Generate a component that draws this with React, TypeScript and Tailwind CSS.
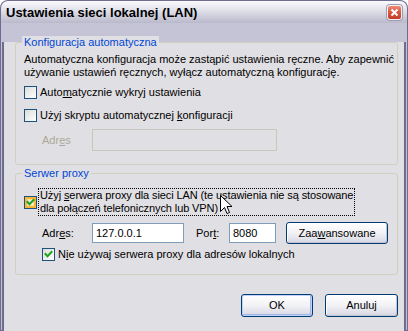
import React from "react";

const FONT = { fontFamily: "Tahoma, 'Liberation Sans', Arial, sans-serif" };

function Check({ checked, hot }: { checked?: boolean; hot?: boolean }) {
  return (
    <div className="relative w-[13px] h-[13px] shrink-0 border border-[#1c5180] bg-gradient-to-br from-[#dcdcd7] to-white">
      {hot && (
        <div className="absolute inset-0 border-2 border-[#f8b636] shadow-[inset_0_0_0_1px_#fedf9c]" />
      )}
      {checked && (
        <svg className="absolute left-[1px] top-[1px]" width="9" height="9" viewBox="0 0 9 9">
          <path d="M1.5 4 L3.5 6.2 L7.5 2" stroke="#21a121" strokeWidth="2" fill="none" strokeLinecap="square" />
        </svg>
      )}
    </div>
  );
}

function Btn({ children, className = "" }: { children: React.ReactNode; className?: string }) {
  return (
    <div
      className={
        "flex items-center justify-center rounded-[3px] border border-[#003c74] bg-gradient-to-b from-white via-[#f2f2f6] to-[#d6d6e2] shadow-[inset_-1px_-1px_0_#c3c3d3,inset_1px_1px_0_#ffffff] text-[11px] text-black " +
        className
      }
    >
      {children}
    </div>
  );
}

function Cursor() {
  return (
    <svg className="absolute left-[220px] top-[195px]" width="13" height="20" viewBox="0 0 13 20">
      <path
        d="M0.5 0.5 L0.5 16.5 L4.5 12.5 L7 18.5 L9.5 17.5 L7 11.5 L12 11.5 Z"
        fill="white"
        stroke="black"
        strokeWidth="1"
        strokeLinejoin="miter"
      />
    </svg>
  );
}

export default function App() {
  return (
    <div className="w-[408px] h-[331px] bg-white" style={FONT}>
      <div className="relative w-[408px] h-[331px] flex flex-col rounded-t-[8px] overflow-hidden bg-[#6f6d8f] p-[1px]">
        {/* title bar */}
        <div className="h-[22px] shrink-0 rounded-t-[7px] bg-gradient-to-b from-[#fbfbfd] via-[#dcdce6] to-[#b9b9cb] flex items-center pl-[5px] pr-[5px]">
          <span className="text-[13px] font-bold text-black leading-none mt-[1px]">
            Ustawienia sieci lokalnej (LAN)
          </span>
          <div className="ml-auto w-[15px] h-[15px] rounded-[3px] border border-[#f4f0f0] bg-gradient-to-b from-[#ee8a78] via-[#d8563f] to-[#c23d27] flex items-center justify-center shadow-[0_0_0_1px_#9e9cb4]">
            <svg width="9" height="9" viewBox="0 0 9 9">
              <path d="M1.5 1.5 L7.5 7.5 M7.5 1.5 L1.5 7.5" stroke="white" strokeWidth="2" />
            </svg>
          </div>
        </div>
        {/* body */}
        <div className="flex-1 bg-[#c5c4d6] px-[1px] pb-[1px]">
          <div className="h-full border-2 border-t-0 border-[#6f6d8f] bg-[#e0dfe3] pl-[11px] pr-[6px] text-[11px] leading-[13px] text-black">
            {/* group 1 */}
            <div className="relative mt-[19px] h-[123px] w-[383px] border border-[#d0d0bf] rounded-[3px] pl-[8px] pt-[10px]">
              <span className="absolute left-[6px] -top-[7px] px-[2px] bg-[#e0dfe3] text-[#0046d5]">
                Konfiguracja automatyczna
              </span>
              <p>
                Automatyczna konfiguracja może zastąpić ustawienia ręczne. Aby zapewnić
                <br />
                używanie ustawień ręcznych, wyłącz automatyczną konfigurację.
              </p>
              <div className="mt-[7px] flex items-center gap-[3px] h-[13px]">
                <Check />
                <span>
                  Auto<u>m</u>atycznie wykryj ustawienia
                </span>
              </div>
              <div className="mt-[10px] flex items-center gap-[3px] h-[13px]">
                <Check />
                <span>
                  Użyj skryptu automatycznej <u>k</u>onfiguracji
                </span>
              </div>
              <div className="mt-[7px] flex items-center h-[22px]">
                <span className="ml-[18px] w-[50px] text-[#aca899]">
                  Adr<u>e</u>s
                </span>
                <div className="h-[22px] w-[185px] border border-[#c9c7ba] bg-[#e0dfe3]" />
              </div>
            </div>
            {/* group 2 */}
            <div className="relative mt-[8px] h-[102px] w-[383px] border border-[#d0d0bf] rounded-[3px] pl-[8px] pt-[14px]">
              <span className="absolute left-[6px] -top-[7px] px-[2px] bg-[#e0dfe3] text-[#0046d5]">
                Serwer proxy
              </span>
              <div className="flex items-center gap-[1px]">
                <Check checked hot />
                <div className="border border-dotted border-black px-[1px] tracking-[-0.1px]">
                  Użyj <u>s</u>erwera proxy dla sieci LAN (te ustawienia nie są stosowane
                  <br />
                  dla połączeń telefonicznych lub VPN)
                </div>
              </div>
              <div className="mt-[6px] flex items-center h-[22px]">
                <span className="ml-[18px] w-[50px]">
                  Adr<u>e</u>s:
                </span>
                <div className="h-[20px] w-[92px] border border-[#7f9db9] bg-white flex items-center pl-[3px]">
                  127.0.0.1
                </div>
                <span className="ml-[12px] w-[33px]">
                  Por<u>t</u>:
                </span>
                <div className="h-[20px] w-[47px] border border-[#7f9db9] bg-white flex items-center pl-[3px]">
                  8080
                </div>
                <Btn className="ml-[10px] w-[102px] h-[22px]">
                  Zaa<u>w</u>ansowane
                </Btn>
              </div>
              <div className="mt-[4px] ml-[18px] flex items-center gap-[3px] h-[13px]">
                <Check checked />
                <span>
                  N<u>i</u>e używaj serwera proxy dla adresów lokalnych
                </span>
              </div>
            </div>
            {/* buttons */}
            <div className="mt-[19px] flex justify-end gap-[12px] w-[383px]">
              <Btn className="w-[72px] h-[23px] shadow-[inset_0_0_0_1px_#c1d3fb,inset_-1px_-1px_0_1px_#9db7e8]">OK</Btn>
              <Btn className="w-[73px] h-[23px]">Anuluj</Btn>
            </div>
          </div>
        </div>
        <Cursor />
      </div>
    </div>
  );
}
